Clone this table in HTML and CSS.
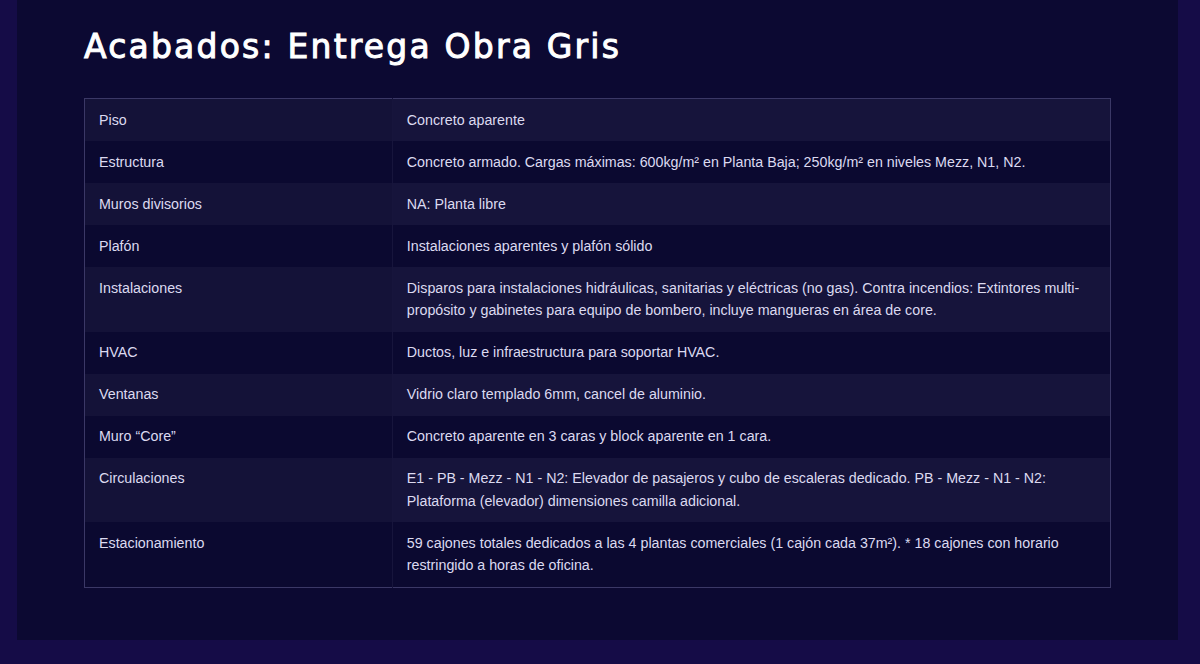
FILE: index.html
```html
<!DOCTYPE html>
<html>
  <head>
    <title>Acabados: Entrega Obra Gris</title>
    <link rel="stylesheet" href="styles.css">
  </head>
  <body>
    <div class="panel">
      <h2 class="title">Acabados: Entrega Obra Gris</h2>
      <table class="specs">
        <tr><td>Piso</td><td>Concreto aparente</td></tr>
        <tr><td>Estructura</td><td>Concreto armado. Cargas máximas: 600kg/m² en Planta Baja; 250kg/m² en niveles Mezz, N1, N2.</td></tr>
        <tr><td>Muros divisorios</td><td>NA: Planta libre</td></tr>
        <tr><td>Plafón</td><td>Instalaciones aparentes y plafón sólido</td></tr>
        <tr><td>Instalaciones</td><td>Disparos para instalaciones hidráulicas, sanitarias y eléctricas (no gas). Contra incendios: Extintores multi-propósito y gabinetes para equipo de bombero, incluye mangueras en área de core.</td></tr>
        <tr><td>HVAC</td><td>Ductos, luz e infraestructura para soportar HVAC.</td></tr>
        <tr><td>Ventanas</td><td>Vidrio claro templado 6mm, cancel de aluminio.</td></tr>
        <tr><td>Muro “Core”</td><td>Concreto aparente en 3 caras y block aparente en 1 cara.</td></tr>
        <tr><td>Circulaciones</td><td>E1 - PB - Mezz - N1 - N2: Elevador de pasajeros y cubo de escaleras dedicado. PB - Mezz - N1 - N2: Plataforma (elevador) dimensiones camilla adicional.</td></tr>
        <tr><td>Estacionamiento</td><td>59 cajones totales dedicados a las 4 plantas comerciales (1 cajón cada 37m²). * 18 cajones con horario restringido a horas de oficina.</td></tr>
      </table>
    </div>
  </body>
</html>
```

FILE: styles.css
```css
body {
  margin: 0;
  background: #150c47;
  font-family: "Liberation Sans", Arial, sans-serif;
}

.panel {
  margin: 0 22px 0 17px;
  height: 640px;
  box-sizing: border-box;
  padding: 27px 67px 0 67px;
  background: #0c0932;
}

.title {
  margin: 0 0 31px 0;
  font-family: "DejaVu Sans", sans-serif;
  font-size: 33px;
  font-weight: normal;
  letter-spacing: 2.2px;
  -webkit-text-stroke: 1px #ffffff;
  line-height: 40px;
  color: #ffffff;
}

.specs {
  width: 100%;
  border-collapse: collapse;
  border: 1px solid #3b3866;
  font-size: 14.25px;
  line-height: 22.5px;
  color: #dcdaf0;
}

.specs td {
  padding: 9.75px 14px;
  vertical-align: top;
}

.specs td:first-child {
  width: 30%;
}

.specs td + td {
  border-left: 1px solid #17153c;
}

.specs tr:nth-child(odd) td {
  background: #16143b;
}

.specs tr:nth-child(odd) td:first-child {
  background: #141238;
}

.specs tr:nth-child(even) td {
  background: #0b0930;
}
```
